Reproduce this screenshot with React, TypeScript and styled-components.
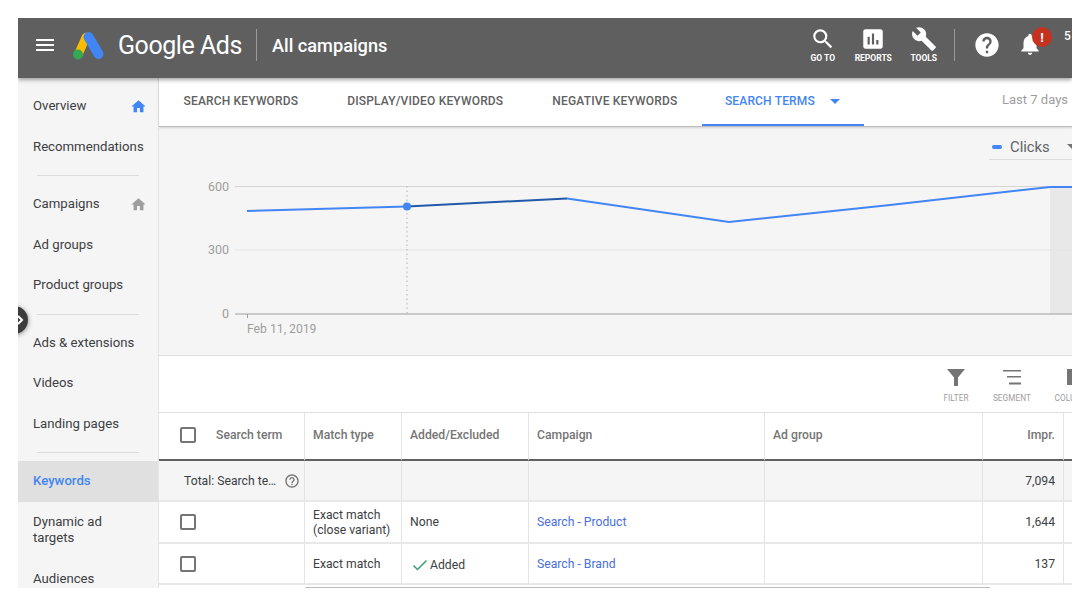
import React from "react";
import styled, { createGlobalStyle } from "styled-components";

const Global = createGlobalStyle`
  html, body { margin: 0; padding: 0; background: #fff; height: 100%; overflow: hidden; }
  body { font-family: Roboto, "Liberation Sans", sans-serif; }
`;

const Frame = styled.div`
  position: relative;
  margin: 18px 0 0 18px;
  width: 1054px;
  height: 570px;
  overflow: hidden;
  display: flex;
  flex-direction: column;
  background: #fff;
`;

const Header = styled.header`
  position: relative;
  z-index: 3;
  flex: none;
  height: 60px;
  background: #5f5f5f;
  color: #fff;
  display: flex;
  align-items: center;
  box-shadow: 0 2px 4px rgba(0, 0, 0, 0.35);
`;
const Burger = styled.svg`
  margin: 0 0 6px 15px;
  width: 24px;
  height: 24px;
  flex: none;
`;
const Logo = styled.svg`
  margin: 0 0 5px 15px;
  width: 33px;
  height: 30px;
  flex: none;
`;
const Brand = styled.span`
  margin: 0 0 6px 13px;
  font-size: 25px;
  font-weight: 400;
  letter-spacing: -0.45px;
  white-space: nowrap;
`;
const VRule = styled.span<{ $ml: number }>`
  flex: none;
  width: 1px;
  height: 32px;
  background: #9a9a9a;
  margin-left: ${(p) => p.$ml}px;
  margin-bottom: 6px;
`;
const PageTitle = styled.span`
  margin: 0 0 6px 15px;
  font-size: 18.2px;
  font-weight: 500;
  white-space: nowrap;
`;
const RightTools = styled.div`
  margin-left: auto;
  display: flex;
  align-items: center;
  height: 100%;
`;
const ToolButton = styled.div`
  width: 50.5px;
  display: flex;
  flex-direction: column;
  align-items: center;
  gap: 1px;
  font-size: 8.5px;
  font-weight: 700;
  white-space: nowrap;
  margin-bottom: 7px;
`;
const HeaderIcon = styled.svg`
  width: 26px;
  height: 26px;
  fill: #fff;
  display: block;
`;
const HelpIcon = styled.svg`
  width: 28px;
  height: 28px;
  fill: #fff;
  margin: 0 0 6px 18px;
  flex: none;
`;
const BellWrap = styled.div`
  position: relative;
  margin: 0 0 6px 16px;
  width: 28px;
  height: 28px;
  flex: none;
`;
const BellBadge = styled.span`
  position: absolute;
  left: 15px;
  top: -4px;
  width: 20px;
  height: 20px;
  border-radius: 50%;
  background: #c5321f;
  color: #fff;
  font-size: 13px;
  font-weight: 700;
  display: flex;
  align-items: center;
  justify-content: center;
`;
const UserText = styled.span`
  margin-left: 19px;
  width: 8px;
  overflow: hidden;
  font-size: 12px;
  font-weight: 500;
  align-self: flex-start;
  margin-top: 11px;
`;

const Body = styled.div`
  flex: 1;
  min-height: 0;
  display: flex;
`;

const Sidebar = styled.nav`
  flex: none;
  width: 140px;
  background: #f5f5f5;
  border-right: 1px solid #e4e4e4;
  padding-top: 8px;
  display: flex;
  flex-direction: column;
  overflow: hidden;
`;
const NavItem = styled.div<{ $active?: boolean; $tall?: boolean }>`
  flex: none;
  height: ${(p) => (p.$tall ? 57 : 40.4)}px;
  padding: 0 11px 0 15px;
  display: flex;
  align-items: center;
  justify-content: space-between;
  font-size: 13.2px;
  line-height: 16px;
  white-space: nowrap;
  font-weight: ${(p) => (p.$active ? 500 : 400)};
  color: ${(p) => (p.$active ? "#4285f4" : "#3c4043")};
  background: ${(p) => (p.$active ? "#e0e0e0" : "transparent")};
`;
const NavRule = styled.div`
  flex: none;
  height: 1px;
  margin: 8.4px 19px 8px 19px;
  background: #dcdcdc;
`;
const NavIcon = styled.svg<{ $color: string }>`
  width: 17px;
  height: 17px;
  fill: ${(p) => p.$color};
  flex: none;
`;
const Collapse = styled.div`
  position: absolute;
  z-index: 4;
  left: -18px;
  top: 288px;
  width: 28px;
  height: 28px;
  border-radius: 50%;
  background: #3c3c3c;
  box-shadow: 0 1px 5px rgba(0, 0, 0, 0.45);
  display: flex;
  align-items: center;
  justify-content: flex-end;
  padding-right: 3px;
  box-sizing: border-box;
`;

const Main = styled.main`
  flex: 1;
  min-width: 0;
  display: flex;
  flex-direction: column;
  background: #fff;
`;
const TabBar = styled.div`
  position: relative;
  z-index: 2;
  flex: none;
  height: 48px;
  display: flex;
  background: #fff;
  border-bottom: 1px solid #bdbdbd;
  box-shadow: 0 1px 2px rgba(0, 0, 0, 0.15);
`;
const Tab = styled.div<{ $active?: boolean }>`
  position: relative;
  padding: 0 24.5px 2px ${(p) => (p.$active ? 23 : 24.5)}px;
  display: flex;
  align-items: center;
  gap: 15px;
  font-size: 12px;
  font-weight: 500;
  letter-spacing: 0.17px;
  white-space: nowrap;
  color: ${(p) => (p.$active ? "#4285f4" : "#616161")};
  box-shadow: ${(p) => (p.$active ? "inset 0 -2px 0 #4285f4" : "none")};
`;
const TabCaret = styled.span`
  width: 0;
  height: 0;
  border-left: 5px solid transparent;
  border-right: 5px solid transparent;
  border-top: 5px solid #4285f4;
`;
const DateRange = styled.div`
  margin-left: auto;
  padding: 0 4px 5px 0;
  align-self: center;
  font-size: 13px;
  color: #9e9e9e;
  white-space: nowrap;
`;

const ChartPanel = styled.section`
  position: relative;
  flex: none;
  height: 228px;
  background: #f5f5f5;
  border-bottom: 1px solid #e0e0e0;
`;
const ChartSvg = styled.svg`
  display: block;
  width: 913px;
  height: 228px;
  font-family: Roboto, "Liberation Sans", sans-serif;
`;
const MetricSelect = styled.div`
  position: absolute;
  top: 10px;
  left: 830px;
  width: 90px;
  height: 23px;
  border-bottom: 1px solid #dcdcdc;
  display: flex;
  align-items: center;
  padding-bottom: 3px;
  box-sizing: border-box;
  font-size: 14.8px;
  color: #5f6368;
`;
const MetricDash = styled.span`
  width: 10px;
  height: 4px;
  border-radius: 2px;
  background: #4285f4;
  margin: 0 8px 0 3px;
`;
const MetricCaret = styled.span`
  margin-left: 17px;
  width: 0;
  height: 0;
  border-left: 5px solid transparent;
  border-right: 5px solid transparent;
  border-top: 5px solid #757575;
`;

const Toolbar = styled.div`
  flex: none;
  height: 56px;
  display: flex;
  justify-content: flex-end;
  overflow: hidden;
`;
const ToolbarInner = styled.div`
  display: flex;
  margin-right: -36px;
`;
const ToolbarItem = styled.div<{ $wide?: boolean }>`
  width: ${(p) => (p.$wide ? 68 : 56)}px;
  display: flex;
  flex-direction: column;
  align-items: center;
  padding-top: 9px;
  gap: 4px;
  font-size: 8.2px;
  letter-spacing: 0.1px;
  color: #9e9e9e;
`;
const ToolbarIcon = styled.svg`
  width: 24px;
  height: 24px;
  fill: #757575;
  display: block;
`;

const Table = styled.div`
  flex: 1;
  min-height: 0;
  display: grid;
  grid-template-columns: 146px 97px 127px 236px 218px 81px 8px;
  grid-template-rows: 48px 41px 42px 41px;
  border-top: 1px solid #e0e0e0;
  overflow: hidden;
  font-size: 12.2px;
  color: #3c4043;
`;
const Cell = styled.div<{
  $kind?: "head" | "total" | "row";
  $align?: "right";
  $first?: boolean;
}>`
  display: flex;
  align-items: center;
  line-height: 15px;
  min-width: 0;
  white-space: nowrap;
  padding: ${(p) => (p.$kind === "head" ? "0 8px 1px" : "1px 8px 0")};
  padding-left: ${(p) => (p.$first ? 21 : 8)}px;
  justify-content: ${(p) => (p.$align ? "flex-end" : "flex-start")};
  border-right: 1px solid #e3e3e3;
  border-bottom: ${(p) =>
    p.$kind === "head" ? "2px solid #616161" : "2px solid #e8e8e8"};
  background: ${(p) => (p.$kind === "total" ? "#f5f5f5" : "#fff")};
  color: ${(p) => (p.$kind === "head" ? "#757575" : "#3c4043")};
  font-weight: ${(p) => (p.$kind === "head" ? 500 : 400)};
`;
const Check = styled.span`
  flex: none;
  box-sizing: border-box;
  width: 16px;
  height: 16px;
  border: 2px solid #757575;
  border-radius: 2px;
  margin: -1px 20px 0 0;
`;
const CampaignLink = styled.span`
  color: #4a6fdc;
`;
const TotalLabel = styled.span`
  margin-left: 4px;
  color: #3c4043;
`;
const QIcon = styled.svg`
  width: 16px;
  height: 16px;
  fill: #757575;
  margin-left: 8px;
  flex: none;
`;
const CheckMark = styled.svg`
  width: 16px;
  height: 16px;
  margin: 2px 2px 0 2px;
  flex: none;
`;
const AddedText = styled.span`
  margin-top: 2px;
`;
const ScrollTrack = styled.div`
  position: absolute;
  left: 287px;
  width: 685px;
  top: 569px;
  height: 1px;
  background: #bdbdbd;
  z-index: 2;
`;

const HOME = "M10 20v-6h4v6h5v-8h3L12 3 2 12h3v8z";
const Q =
  "M11 18h2v-2h-2v2zm1-16C6.48 2 2 6.48 2 12s4.48 10 10 10 10-4.48 10-10S17.52 2 12 2zm0 18c-4.41 0-8-3.59-8-8s3.59-8 8-8 8 3.59 8 8-3.59 8-8 8zm0-14c-2.21 0-4 1.79-4 4h2c0-1.1.9-2 2-2s2 .9 2 2c0 2-3 1.75-3 5h2c0-2.25 3-2.5 3-5 0-2.21-1.79-4-4-4z";

const Nav = ({ label, icon, active }: { label: string; icon?: string; active?: boolean }) => (
  <NavItem $active={active}>
    {label}
    {icon && (
      <NavIcon viewBox="0 0 24 24" $color={icon}>
        <path d={HOME} />
      </NavIcon>
    )}
  </NavItem>
);

export default function App() {
  return (
    <>
      <Global />
      <Frame>
        <Header>
          <Burger viewBox="0 0 24 24" fill="#fff">
            <path d="M3 18h18v-2H3v2zm0-5h18v-2H3v2zm0-7v2h18V6H3z" />
          </Burger>
          <Logo viewBox="0 0 33 30">
            <path d="M14 6 L6.5 23" stroke="#fbbc04" strokeWidth="8.5" strokeLinecap="round" fill="none" />
            <path d="M16.5 6 L26.5 23" stroke="#4285f4" strokeWidth="10" strokeLinecap="round" fill="none" />
            <circle cx="6" cy="23.5" r="5" fill="#34a853" />
          </Logo>
          <Brand>Google Ads</Brand>
          <VRule $ml={14} />
          <PageTitle>All campaigns</PageTitle>
          <RightTools>
            <ToolButton>
              <HeaderIcon viewBox="0 0 24 24">
                <path d="M15.5 14h-.79l-.28-.27A6.471 6.471 0 0 0 16 9.5 6.5 6.5 0 1 0 9.5 16c1.61 0 3.09-.59 4.23-1.57l.27.28v.79l5 4.99L20.49 19l-4.99-5zm-6 0C7.01 14 5 11.99 5 9.5S7.01 5 9.5 5 14 7.01 14 9.5 11.99 14 9.5 14z" />
              </HeaderIcon>
              GO TO
            </ToolButton>
            <ToolButton>
              <HeaderIcon viewBox="0 0 24 24">
                <path d="M19 3H5c-1.1 0-2 .9-2 2v14c0 1.1.9 2 2 2h14c1.1 0 2-.9 2-2V5c0-1.1-.9-2-2-2zM9 17H7v-7h2v7zm4 0h-2V7h2v10zm4 0h-2v-4h2v4z" />
              </HeaderIcon>
              REPORTS
            </ToolButton>
            <ToolButton>
              <HeaderIcon viewBox="0 0 24 24">
                <path d="M22.7 19l-9.1-9.1c.9-2.3.4-5-1.5-6.9-2-2-5-2.4-7.4-1.3L9 6 6 9 1.6 4.7C.4 7.1.9 10.1 2.9 12.1c1.9 1.9 4.6 2.4 6.9 1.5l9.1 9.1c.4.4 1 .4 1.4 0l2.3-2.3c.5-.4.5-1.1.1-1.4z" />
              </HeaderIcon>
              TOOLS
            </ToolButton>
            <VRule $ml={5} />
            <HelpIcon viewBox="0 0 24 24">
              <path d="M12 2C6.48 2 2 6.48 2 12s4.48 10 10 10 10-4.48 10-10S17.52 2 12 2zm1 17h-2v-2h2v2zm2.07-7.75l-.9.92C13.45 12.9 13 13.5 13 15h-2v-.5c0-1.1.45-2.1 1.17-2.83l1.24-1.26c.37-.36.59-.86.59-1.41 0-1.1-.9-2-2-2s-2 .9-2 2H8c0-2.21 1.79-4 4-4s4 1.79 4 4c0 .88-.36 1.68-.93 2.25z" />
            </HelpIcon>
            <BellWrap>
              <HeaderIcon viewBox="0 0 24 24">
                <path d="M12 22c1.1 0 2-.9 2-2h-4c0 1.1.9 2 2 2zm6-6v-5c0-3.07-1.63-5.64-4.5-6.32V4c0-.83-.67-1.5-1.5-1.5s-1.5.67-1.5 1.5v.68C7.64 5.36 6 7.92 6 11v5l-2 2v1h16v-1l-2-2z" />
              </HeaderIcon>
              <BellBadge>!</BellBadge>
            </BellWrap>
            <UserText>5</UserText>
          </RightTools>
        </Header>
        <Body>
          <Sidebar>
            <Nav label="Overview" icon="#4285f4" />
            <Nav label="Recommendations" />
            <NavRule />
            <Nav label="Campaigns" icon="#9e9e9e" />
            <Nav label="Ad groups" />
            <Nav label="Product groups" />
            <NavRule />
            <Nav label="Ads & extensions" />
            <Nav label="Videos" />
            <Nav label="Landing pages" />
            <NavRule />
            <Nav label="Keywords" active />
            <NavItem $tall>
              <span>Dynamic ad<br />targets</span>
            </NavItem>
            <Nav label="Audiences" />
          </Sidebar>
          <Collapse>
            <svg width="8" height="12" viewBox="0 0 8 12">
              <path d="M1 2l4 4-4 4" stroke="#fff" strokeWidth="2" fill="none" />
            </svg>
          </Collapse>
          <Main>
            <TabBar>
              <Tab>SEARCH KEYWORDS</Tab>
              <Tab>DISPLAY/VIDEO KEYWORDS</Tab>
              <Tab>NEGATIVE KEYWORDS</Tab>
              <Tab $active>
                SEARCH TERMS
                <TabCaret />
              </Tab>
              <DateRange>Last 7 days</DateRange>
            </TabBar>
            <ChartPanel>
              <ChartSvg viewBox="0 0 913 228">
                <rect x="891" y="59" width="22" height="128" fill="#e8e8e8" />
                <line x1="76" y1="59.5" x2="913" y2="59.5" stroke="#d6d6d6" />
                <line x1="76" y1="123" x2="913" y2="123" stroke="#e4e4e4" />
                <line x1="76" y1="187" x2="913" y2="187" stroke="#9e9e9e" />
                <line x1="88.5" y1="187" x2="88.5" y2="191" stroke="#9e9e9e" />
                <line x1="248" y1="59" x2="248" y2="187" stroke="#b0b0b0" strokeDasharray="1.5 3" />
                <polyline points="88,84 248,79.5" fill="none" stroke="#4285f4" strokeWidth="2" />
                <polyline points="248,79.5 408,71.5" fill="none" stroke="#2259a8" strokeWidth="2" />
                <polyline points="408,71.5 570,95 731,78 891,60 913,60" fill="none" stroke="#4285f4" strokeWidth="2" />
                <circle cx="248" cy="79.5" r="4" fill="#4285f4" />
                <g fill="#9e9e9e" fontSize="12.5" textAnchor="end">
                  <text x="70" y="64">600</text>
                  <text x="70" y="127">300</text>
                  <text x="70" y="191">0</text>
                </g>
                <text x="88" y="206" fill="#9e9e9e" fontSize="12.2">Feb 11, 2019</text>
              </ChartSvg>
              <MetricSelect>
                <MetricDash />
                Clicks
                <MetricCaret />
              </MetricSelect>
            </ChartPanel>
            <Toolbar>
              <ToolbarInner>
                <ToolbarItem>
                  <ToolbarIcon viewBox="0 0 24 24">
                    <path d="M3 4h18l-7 8.5V21h-4v-8.5z" />
                  </ToolbarIcon>
                  FILTER
                </ToolbarItem>
                <ToolbarItem>
                  <ToolbarIcon viewBox="0 0 24 24">
                    <path d="M3 5h18v1.6H3zM7 11h14v1.6H7zM9 17.5h12v2H9z" />
                  </ToolbarIcon>
                  SEGMENT
                </ToolbarItem>
                <ToolbarItem $wide>
                  <ToolbarIcon viewBox="0 0 24 24">
                    <path d="M5 4h6v16H5zM13 4h6v16h-6z" />
                  </ToolbarIcon>
                  COLUMNS
                </ToolbarItem>
              </ToolbarInner>
            </Toolbar>
            <Table>
              <Cell $kind="head" $first><Check />Search term</Cell>
              <Cell $kind="head">Match type</Cell>
              <Cell $kind="head">Added/Excluded</Cell>
              <Cell $kind="head">Campaign</Cell>
              <Cell $kind="head">Ad group</Cell>
              <Cell $kind="head" $align="right">Impr.</Cell>
              <Cell $kind="head" />

              <Cell $kind="total" $first>
                <TotalLabel>Total: Search te…</TotalLabel>
                <QIcon viewBox="0 0 24 24"><path d={Q} /></QIcon>
              </Cell>
              <Cell $kind="total" />
              <Cell $kind="total" />
              <Cell $kind="total" />
              <Cell $kind="total" />
              <Cell $kind="total" $align="right">7,094</Cell>
              <Cell $kind="total" />

              <Cell $first><Check /></Cell>
              <Cell>Exact match<br />(close variant)</Cell>
              <Cell>None</Cell>
              <Cell><CampaignLink>Search - Product</CampaignLink></Cell>
              <Cell />
              <Cell $align="right">1,644</Cell>
              <Cell />

              <Cell $first><Check /></Cell>
              <Cell>Exact match</Cell>
              <Cell>
                <CheckMark viewBox="0 0 16 16">
                  <path d="M1.5 8.5l4 4 9-9" stroke="#34a26e" strokeWidth="1.5" fill="none" />
                </CheckMark>
                <AddedText>Added</AddedText>
              </Cell>
              <Cell><CampaignLink>Search - Brand</CampaignLink></Cell>
              <Cell />
              <Cell $align="right">137</Cell>
              <Cell />
            </Table>
          </Main>
        </Body>
        <ScrollTrack />
      </Frame>
    </>
  );
}
